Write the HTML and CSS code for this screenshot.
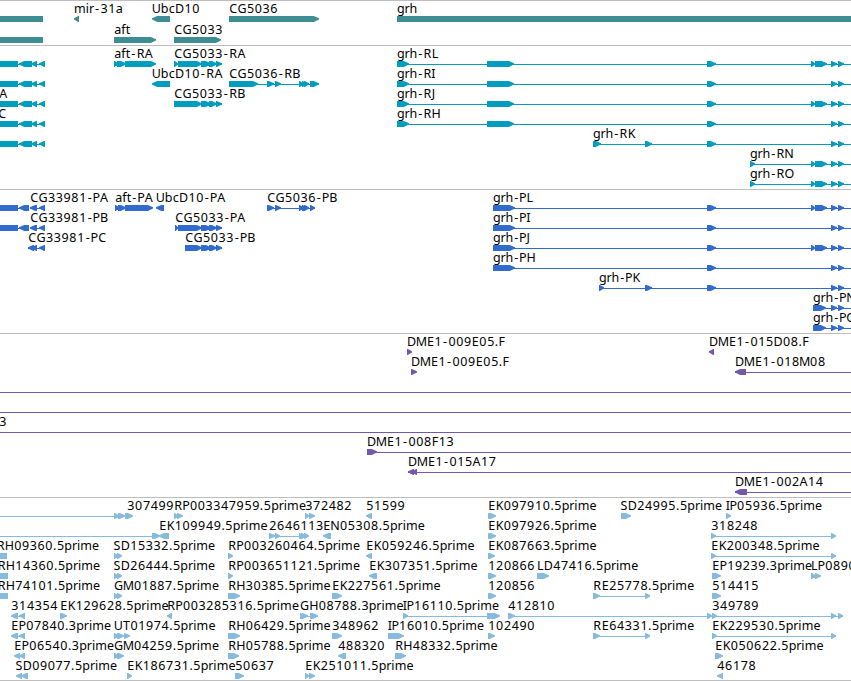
FILE: index.html
```html
<!DOCTYPE html>
<html lang="en">
<head>
<meta charset="utf-8">
<title>Genome browser</title>
<link rel="stylesheet" href="styles.css">
</head>
<body>
<main class="browser" id="browser"></main>
<script src="tracks.js"></script>
</body>
</html>
```
FILE: styles.css
```css
body {
  margin: 0;
  background: #fff;
}

.browser {
  display: flex;
  flex-direction: column;
  width: 851px;
  height: 681px;
  overflow: hidden;
}

.track {
  flex: none;
  box-sizing: border-box;
  border-top: 1px solid #bebebe;
  overflow: hidden;
}

.track svg {
  display: block;
  width: 100%;
  height: 100%;
}

.track text {
  font: 12.5px "Noto Sans", sans-serif;
  fill: #000;
  font-kerning: none;
}

.genes { height: 45px; color: #3e8d93; }
.transcripts { height: 144px; color: #009dbf; }
.proteins { height: 144px; color: #306bcd; }
.clones { height: 164px; color: #7459a8; }
.ests { height: 183px; color: #87bbdd; }
.end { height: 1px; }

.feature { fill: currentColor; }
```
FILE: tracks.js
```js
// Shape tokens: "a-b" block, "a-b>" / "a-b<" arrow, "a_b" thin connector.
// Each row holds a shape string followed by [x, label] pairs.
const left = "0-18 18_45 19-32< 31-37< 39-45< ";
const leftP = "0-18 18_29 19-29< 30_45 30-37< 39-45< ";
const tail = "831-837> 838-844> ";
const mid = "707-716> " + tail;
const ex = "811-815> 815-827> ";
const cg33 = "201-211> 209-217> 216-222> ";
const grhR = "397_851 397-409> 487-514> " + mid;
const grhP = "493_851 493-515> " + mid;

const tracks = [
  { name: "genes", first: 18, step: 21, rows: [
    ["0-43 74-79< 152-170< 229-319> 397-851", [74, "mir-31a"], [152, "UbcD10"], [229, "CG5036"], [397, "grh"]],
    ["0-43 114-156> 174-221>", [114, "aft"], [174, "CG5033"]]
  ]},
  { name: "transcripts", first: 18, step: 20, rows: [
    [left + "114-118> 117-126> 125-156> 174_222 174-178> 178-202> " + cg33 + grhR + ex, [114, "aft-RA"], [174, "CG5033-RA"], [397, "grh-RL"]],
    [left + "152-170< 229_319 229-258> 267-274> 275-281> 299-303> 302-306> 304-309> 310-319> " + grhR, [152, "UbcD10-RA"], [229, "CG5036-RB"], [397, "grh-RI"]],
    [left + "174_222 174-202> " + cg33 + grhR + ex, [-1, "A"], [174, "CG5033-RB"], [397, "grh-RJ"]],
    [left + grhR, [-2, "C"], [397, "grh-RH"]],
    [left + "593_851 593-601> 645-652> " + mid, [593, "grh-RK"]],
    ["750_851 750-755> " + ex + tail, [750, "grh-RN"]],
    ["750_851 750-755> " + ex + tail, [750, "grh-RO"]]
  ]},
  { name: "proteins", first: 18, step: 20, rows: [
    [leftP + "115-119> 118-126> 125-153> 156-164< 267_315 267-274> 275-281> 299-303> 302-306> 304-309> 310-315> " + grhP + ex, [30, "CG33981-PA"], [115, "aft-PA"], [156, "UbcD10-PA"], [267, "CG5036-PB"], [493, "grh-PL"]],
    [leftP + "175_222 175-178> 178-202> " + cg33 + grhP, [30, "CG33981-PB"], [175, "CG5033-PA"], [493, "grh-PI"]],
    ["28_45 28-34< 32-37< 39-45< 185_222 185-202> " + cg33 + grhP + ex, [28, "CG33981-PC"], [185, "CG5033-PB"], [493, "grh-PJ"]],
    [grhP, [493, "grh-PH"]],
    ["599_851 599-604> 645-652> " + mid, [599, "grh-PK"]],
    ["813_851 813-826> " + tail, [813, "grh-PN"]],
    ["813_851 813-826> " + tail, [813, "grh-PO"]]
  ]},
  { name: "clones", first: 18, step: 20, rows: [
    ["407-412> 709-714<", [407, "DME1-009E05.F"], [709, "DME1-015D08.F"]],
    ["411-417> 735_851 735-746<", [411, "DME1-009E05.F"], [735, "DME1-018M08"]],
    ["0_851"],
    ["0_851"],
    ["0_851", [-1, "3"]],
    ["367_851 367-377>", [367, "DME1-008F13"]],
    ["408_851 408-414< 412-417<", [408, "DME1-015A17"]],
    ["735_851 735-747<", [735, "DME1-002A14"]]
  ]},
  { name: "ests", first: 18, step: 20, rows: [
    ["0_114 114-119> 118-125> 125-133> 174-178> 177-183> 305-309> 309-315> 366-372< 488-496> 621-631> 726-731>", [127, "307499"], [174, "RP003347959.5prime"], [305, "372482"], [366, "51599"], [488, "EK097910.5prime"], [620, "SD24995.5prime"], [726, "IP05936.5prime"]],
    ["0_152 152-160> 159-169< 269_308 269-275> 275-280> 299-303> 301-306> 304-309> 323-331< 488-496> 711_836 711-716> 831-836>", [159, "EK109949.5prime"], [269, "2646113"], [323, "EN05308.5prime"], [488, "EK097926.5prime"], [711, "318248"]],
    ["0-7 114-118> 117-122> 228-233> 366-372< 488-495> 711_836 711-716> 831-836>", [-3.5, "RH09360.5prime"], [113, "SD15332.5prime"], [228, "RP003260464.5prime"], [366, "EK059246.5prime"], [488, "EK087663.5prime"], [711, "EK200348.5prime"]],
    ["0-8 114-118> 117-122> 228-233> 369-377< 488-496> 537-549> 712-721> 811-816> 815-821>", [-2.5, "RH14360.5prime"], [113, "SD26444.5prime"], [228, "RP003651121.5prime"], [369, "EK307351.5prime"], [488, "120866"], [537, "LD47416.5prime"], [712, "EP19239.3prime"], [811, "LP0890"]],
    ["0-8 114-118> 117-122> 228-240> 332-342> 488-496> 593_650 593-600> 645-650> 712-721>", [-2.5, "RH74101.5prime"], [114, "GM01887.5prime"], [228, "RH30385.5prime"], [332, "EK227561.5prime"], [488, "120856"], [593, "RE25778.5prime"], [712, "514415"]],
    ["11_25 11-18< 19-25< 60-67> 167-172< 300_318 300-304> 302-308> 310-318> 403_490 403-408> 487-500> 508_843 508-515> 707-712> 712-717> 831-836> 838-843>", [11, "314354"], [60, "EK129628.5prime"], [167, "RP003285316.5prime"], [300, "GH08788.3prime"], [403, "IP16110.5prime"], [508, "412810"], [712, "349789"]],
    ["11_25 11-18< 19-25< 114-118> 117-124> 124-130> 228-240> 332-342> 388-404> 488-495> 593_650 593-600> 645-650> 712_836 712-717> 831-836>", [11, "EP07840.3prime"], [114, "UT01974.5prime"], [228, "RH06429.5prime"], [332, "348962"], [388, "IP16010.5prime"], [488, "102490"], [593, "RE64331.5prime"], [712, "EK229530.5prime"]],
    ["14-20< 19-25< 114-118> 117-124> 228-239> 338-346< 395-406> 715-723>", [14, "EP06540.3prime"], [114, "GM04259.5prime"], [228, "RH05788.5prime"], [338, "488320"], [395, "RH48332.5prime"], [715, "EK050622.5prime"]],
    ["16-22< 21-28< 127-132> 235-244> 305-309> 309-315> 717-723<", [15, "SD09077.5prime"], [127, "EK186731.5prime"], [235, "50637"], [305, "EK251011.5prime"], [717, "46178"]]
  ]}
];

function shape(token, y) {
  const [, s, kind, e, dir] = token.match(/^(\d+)([-_])(\d+)([<>]?)$/);
  const a = +s, b = +e;
  if (kind === "_") return `M${a} ${y}H${b}v1H${a}z`;
  const t = y - 3, u = y + 3;
  const tip = Math.min(6, b - a);
  if (dir === ">") return `M${a} ${t}H${b - tip + 0.8}L${b} ${y - 0.8}V${y + 0.6}L${b - tip + 0.8} ${u}H${a}z`;
  if (dir === "<") return `M${b} ${t}V${u}H${a + tip - 0.8}L${a} ${y + 0.6}V${y - 0.8}L${a + tip - 0.8} ${t}z`;
  return `M${a} ${t}H${b}V${u}H${a}z`;
}

const cells = document.createElement("canvas").getContext("2d");
const glyphs = document.createElement("canvas").getContext("2d");
cells.font = '12px "DejaVu Sans"';
glyphs.font = '12.5px "Noto Sans"';

function positions(text, start) {
  let x = start;
  return [...text].map(c => {
    const cell = cells.measureText(c).width + (c === "-" ? 1.8 : /\d/.test(c) ? 0.15 : 0);
    const at = x + (cell - glyphs.measureText(c).width) / 2;
    x += cell;
    return at.toFixed(2);
  }).join(" ");
}

const root = document.getElementById("browser");
for (const track of tracks) {
  let body = "";
  track.rows.forEach(([shapes, ...labels], i) => {
    const y = track.first + i * track.step;
    const d = shapes.trim().split(/\s+/).map(t => shape(t, y)).join("");
    body += `<path class="feature" d="${d}"/>`;
    for (const [x, label] of labels) {
      body += `<text x="${positions(label, x)}" y="${y - 6}">${label}</text>`;
    }
  });
  root.insertAdjacentHTML("beforeend", `<section class="track ${track.name}"><svg>${body}</svg></section>`);
}
root.insertAdjacentHTML("beforeend", '<div class="track end"></div>');
```
